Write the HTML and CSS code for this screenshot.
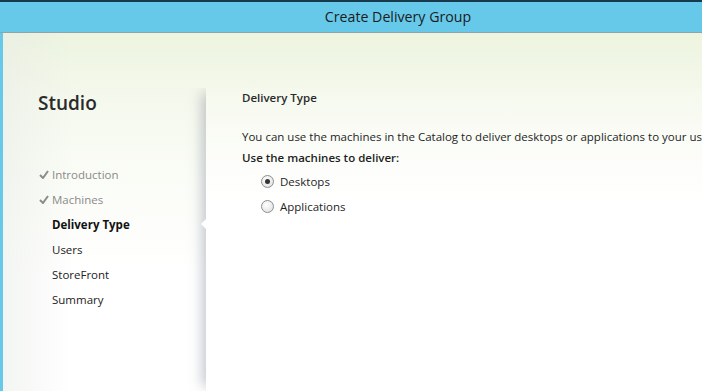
FILE: index.html
```html
<!DOCTYPE html>
<html lang="en">
<head>
  <meta charset="UTF-8">
  <meta name="viewport" content="width=device-width,initial-scale=1.0">
  <title>Create Delivery Group</title>
  <link rel="stylesheet" href="styles.css">
</head>
<body>
  <div class="window">
    <div class="titlebar">Create Delivery Group</div>
    <div class="frame">
      <aside class="sidebar">
        <h1 class="brand">Studio</h1>
        <ul class="steps">
          <li class="done"><svg class="check" viewBox="0 0 10 9" width="10" height="9"><path d="M1 5 L4 8 L9 1" fill="none" stroke="#8c8c8c" stroke-width="2"/></svg>Introduction</li>
          <li class="done"><svg class="check" viewBox="0 0 10 9" width="10" height="9"><path d="M1 5 L4 8 L9 1" fill="none" stroke="#8c8c8c" stroke-width="2"/></svg>Machines</li>
          <li class="current">Delivery Type</li>
          <li>Users</li>
          <li>StoreFront</li>
          <li>Summary</li>
        </ul>
      </aside>
      <main class="panel">
        <h2 class="panel-title">Delivery Type</h2>
        <p class="intro">You can use the machines in the Catalog to deliver desktops or applications to your users.</p>
        <p class="question">Use the machines to deliver:</p>
        <div class="options">
          <label class="option"><span class="radio checked"></span>Desktops</label>
          <label class="option"><span class="radio"></span>Applications</label>
        </div>
      </main>
    </div>
  </div>
</body>
</html>
```

FILE: styles.css
```css
body {
  margin: 0;
  font-family: "Open Sans", "Noto Sans", sans-serif;
  font-size: 11.5px;
  color: #1e1e1e;
  background: #fff;
  overflow: hidden;
}
.window {
  height: 391px;
  display: flex;
  flex-direction: column;
  border-top: 2px solid #173a4c;
  box-sizing: border-box;
}
.titlebar {
  height: 30px;
  line-height: 30px;
  background: #66c9ea;
  border-bottom: 1px solid #8fa3a8;
  text-align: center;
  font-size: 14.2px;
  color: #1b1b1b;
  padding-left: 94px;
}
.frame {
  flex: 1;
  display: flex;
  border-left: 3px solid #66c9ea;
  background: linear-gradient(to bottom, #edf4df 0, #f4f8ec 60px, #fafcf6 140px, #fff 240px);
}
.sidebar {
  width: 203px;
  flex: none;
  padding: 57px 0 0 35px;
  box-sizing: border-box;
  background: linear-gradient(to right, rgba(232,236,230,0.5) 0, rgba(255,255,255,0) 70px);
}
.brand {
  margin: 0;
  font-size: 19px;
  font-weight: 600;
  line-height: 26px;
  color: #2a2a2a;
}
.steps {
  list-style: none;
  margin: 46px 0 0;
  padding: 0;
}
.steps li {
  position: relative;
  height: 25px;
  line-height: 25px;
  padding-left: 14px;
  color: #222;
}
.steps li.done {
  color: #8a8a8a;
}
.steps .check {
  position: absolute;
  left: 1px;
  top: 8px;
}
.steps li.current {
  font-weight: 700;
  color: #111;
}
.steps li.current::after {
  content: "";
  position: absolute;
  right: -1px;
  top: 6px;
  border: 6px solid transparent;
  border-right-color: #fff;
  z-index: 2;
}
.panel {
  flex: 1;
  position: relative;
  margin-top: 55px;
  padding: 2px 0 0 36px;
  white-space: nowrap;
  overflow: hidden;
  box-shadow: -9px 0 12px -5px rgba(90,100,120,0.35);
  clip-path: inset(0 0 0 -30px);
  background: linear-gradient(to bottom, rgba(246,249,238,0.6), rgba(255,255,255,1) 120px);
}
.panel-title {
  margin: 0;
  font-size: 11.5px;
  font-weight: 600;
  line-height: 16px;
  color: #2a2a2a;
}
.intro {
  margin: 23px 0 0;
  line-height: 16px;
}
.question {
  margin: 5px 0 0;
  line-height: 16px;
  font-weight: 600;
}
.options {
  display: flex;
  flex-direction: column;
  padding: 3px 0 0 19px;
}
.option {
  display: flex;
  align-items: center;
  gap: 6px;
  height: 25px;
}
.radio {
  width: 11px;
  height: 11px;
  border-radius: 50%;
  border: 1px solid #8d8d8d;
  background: radial-gradient(circle at 40% 35%, #fff, #dcdcdc);
  position: relative;
}
.radio.checked::after {
  content: "";
  position: absolute;
  left: 3px;
  top: 3px;
  width: 5px;
  height: 5px;
  border-radius: 50%;
  background: #333;
}
```
